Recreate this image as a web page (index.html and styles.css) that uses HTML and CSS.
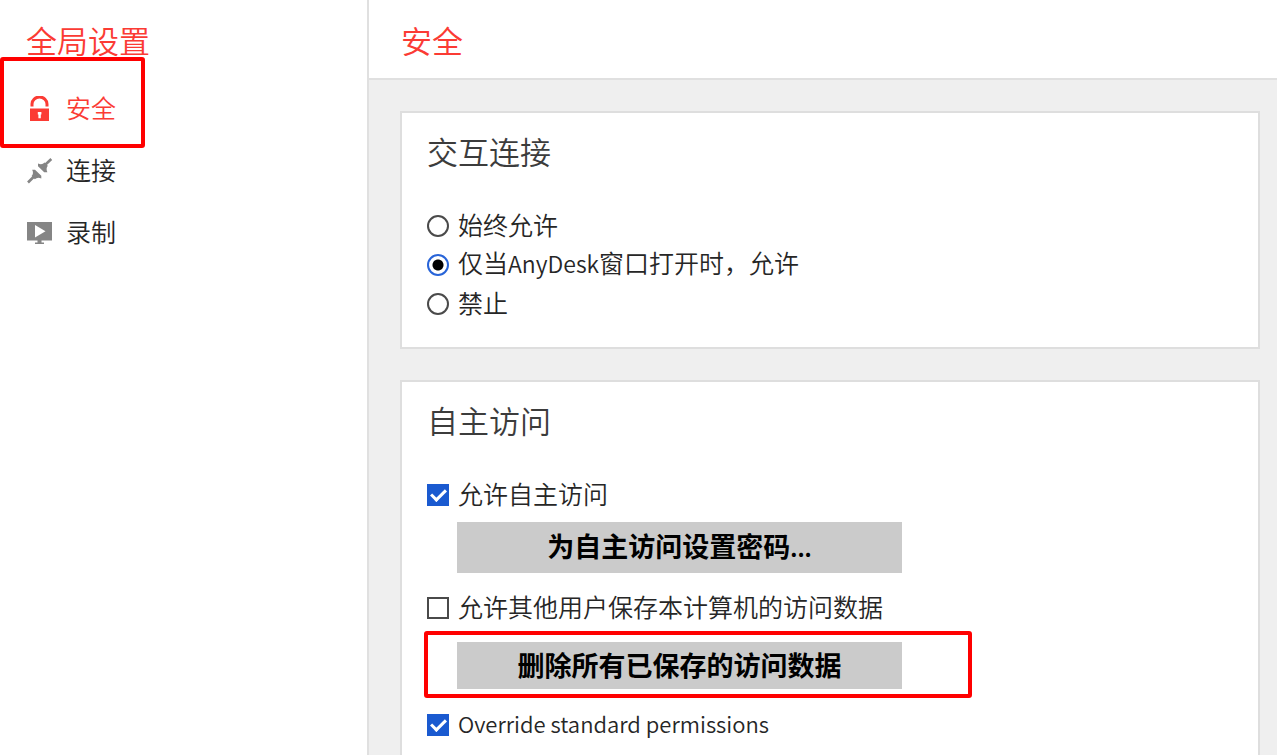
FILE: index.html
```html
<!DOCTYPE html>
<html lang="zh-CN">
<head>
<meta charset="utf-8">
<meta name="viewport" content="width=device-width, initial-scale=1">
<title>全局设置</title>
<link rel="stylesheet" href="styles.css">
</head>
<body>
<div class="app">
  <aside class="sidebar">
    <h1 class="sidebar-title">全局设置</h1>
    <nav class="nav">
      <a class="nav-item active marked" href="#security" aria-current="page">
        <svg class="icon" viewBox="0 0 26 26" aria-hidden="true">
          <path d="M5 10.500V8a7.500 7 0 0 1 15 0V10.500" fill="none" stroke="currentColor" stroke-width="3"/>
          <rect x="3" y="12.500" width="19" height="12.500" fill="currentColor"/>
          <path d="M10.800 16h3.600v2.600h-.6v3.600h-2.400v-3.600h-.6z" fill="#fff"/>
        </svg>
        <span class="label">安全</span>
      </a>
      <a class="nav-item" href="#connection">
        <svg class="icon" viewBox="0 0 26 26" aria-hidden="true">
          <g fill="none" stroke="currentColor" stroke-width="2.600">
            <path d="M18 7 24.300 1M1 24.500 7.500 18"/>
          </g>
          <g fill="currentColor">
            <path d="M11 5.500Q15 7.200 17.600 4.600L20.800 7.800Q18.600 10.500 20.400 14.300L17.200 14.300 11 8.300z"/>
            <path d="M5.200 11.800H8L14.300 17.800V20.400Q10.500 18.600 7.800 21.200L4.600 18Q7 15.500 5.200 11.800z"/>
          </g>
        </svg>
        <span class="label">连接</span>
      </a>
      <a class="nav-item" href="#recording">
        <svg class="icon" viewBox="0 0 26 26" aria-hidden="true">
          <path d="M0 2h25v18.500H14.500v2H17v1.500H8v-1.500h2.500v-2H0z" fill="currentColor"/>
          <path d="M8 5v12.500L18.500 11.200z" fill="#fff"/>
        </svg>
        <span class="label">录制</span>
      </a>
    </nav>
  </aside>
  <main class="content">
    <header class="content-header">
      <h2 class="page-title">安全</h2>
    </header>
    <div class="cards">
      <section class="card">
        <h3 class="card-title">交互连接</h3>
        <div class="radio-group" role="radiogroup" aria-label="交互连接">
          <label class="option"><input class="radio" type="radio" name="interactive"><span class="label">始终允许</span></label>
          <label class="option"><input class="radio" type="radio" name="interactive" checked><span class="label">仅当<span class="latin">AnyDesk</span>窗口打开时，允许</span></label>
          <label class="option"><input class="radio" type="radio" name="interactive"><span class="label">禁止</span></label>
        </div>
      </section>
      <section class="card">
        <h3 class="card-title">自主访问</h3>
        <div class="access">
          <label class="option"><input class="check" type="checkbox" checked><span class="label">允许自主访问</span></label>
          <div class="action"><button class="button" type="button">为自主访问设置密码<span class="small">...</span></button></div>
          <label class="option"><input class="check" type="checkbox"><span class="label">允许其他用户保存本计算机的访问数据</span></label>
          <div class="action marked"><button class="button" type="button">删除所有已保存的访问数据</button></div>
          <label class="option"><input class="check" type="checkbox" checked><span class="label small">Override standard permissions</span></label>
        </div>
      </section>
    </div>
  </main>
</div>
</body>
</html>
```
FILE: styles.css
```css
*,
*::before,
*::after {
  box-sizing: border-box;
}

body {
  margin: 0;
  background: #fff;
  color: #262626;
  font-family: "Noto Sans CJK SC", "Noto Sans", sans-serif;
  font-size: 25px;
  font-weight: 350;
  line-height: 40px;
}

h1, h2, h3 {
  margin: 0;
  font-size: 31px;
  font-weight: 350;
  line-height: 40px;
}

.app {
  display: grid;
  grid-template-columns: minmax(160px, 367px) 1fr;
  height: 100vh;
  overflow: hidden;
}

.sidebar {
  padding-top: 20px;
}

.sidebar-title {
  padding-left: 26px;
  color: #fb3b34;
}

.nav {
  display: flex;
  flex-direction: column;
  padding-top: 18px;
}

.nav-item {
  position: relative;
  display: flex;
  align-items: center;
  gap: 13px;
  height: 62px;
  padding-left: 27px;
  color: inherit;
  text-decoration: none;
}

.nav-item.active {
  color: #fb3b34;
}

.label {
  padding-bottom: 4px;
  line-height: 36px;
}

.latin {
  font-size: 23px;
}

.small {
  font-size: 22px;
}

.icon {
  flex: none;
  width: 26px;
  height: 26px;
  color: #858585;
}

.active .icon {
  color: #fb3b34;
}

/* Red frames drawn over the highlighted controls */
.marked::after {
  content: "";
  position: absolute;
  border: 4px solid #f00;
  border-radius: 3px;
  pointer-events: none;
}

.nav-item.marked::after {
  top: -21px;
  left: 0;
  width: 145px;
  height: 91px;
}

.content {
  display: flex;
  flex-direction: column;
  min-width: 0;
  border-left: 2px solid #e0e0e0;
  background: #efefef;
}

.content-header {
  padding: 20px 32px 18px;
  border-bottom: 2px solid #e0e0e0;
  background: #fff;
}

.page-title {
  color: #fb3b34;
}

.cards {
  display: flex;
  flex-direction: column;
  gap: 31px;
  padding: 31px 17px 31px 31px;
}

.card {
  padding: 18px 24px 22px 25px;
  border: 2px solid #dedede;
  background: #fff;
}

.card-title {
  color: #3c3c3c;
}

.radio-group {
  padding: 35px 0 2px;
}

.access {
  padding-top: 35px;
}

.option {
  display: flex;
  align-items: center;
  gap: 9px;
}

.radio-group .option {
  height: 39px;
}

.radio,
.check {
  flex: none;
  appearance: none;
  width: 22px;
  height: 22px;
  margin: 0;
  border: 2px solid #4a4a4a;
  background: #fff;
}

.radio {
  border-radius: 50%;
}

.radio:checked {
  border-color: #2864d8;
  background: radial-gradient(circle, #000 5px, #fff 6px);
}

.check:checked {
  display: grid;
  place-items: center;
  border-color: #1a5ad0;
  background: #1a5ad0;
}

.check:checked::before {
  content: "";
  width: 15px;
  height: 9px;
  margin-bottom: 4px;
  border: solid #fff;
  border-width: 0 0 3px 3px;
  transform: rotate(-45deg);
}

.action {
  position: relative;
  padding: 7px 0 15px 30px;
}

.action.marked {
  padding: 14px 0 16px 30px;
}

.action.marked::after {
  top: 3px;
  left: -3px;
  width: 548px;
  max-width: 100%;
  height: 67px;
}

.button {
  display: block;
  width: 445px;
  max-width: 100%;
  padding: 4px 8px 6px;
  border: 0;
  background: #cbcbcb;
  color: #000;
  font: inherit;
  font-size: 27px;
  font-weight: 700;
  line-height: 40px;
}

.marked .button {
  padding: 3px 8px 4px;
}
```
